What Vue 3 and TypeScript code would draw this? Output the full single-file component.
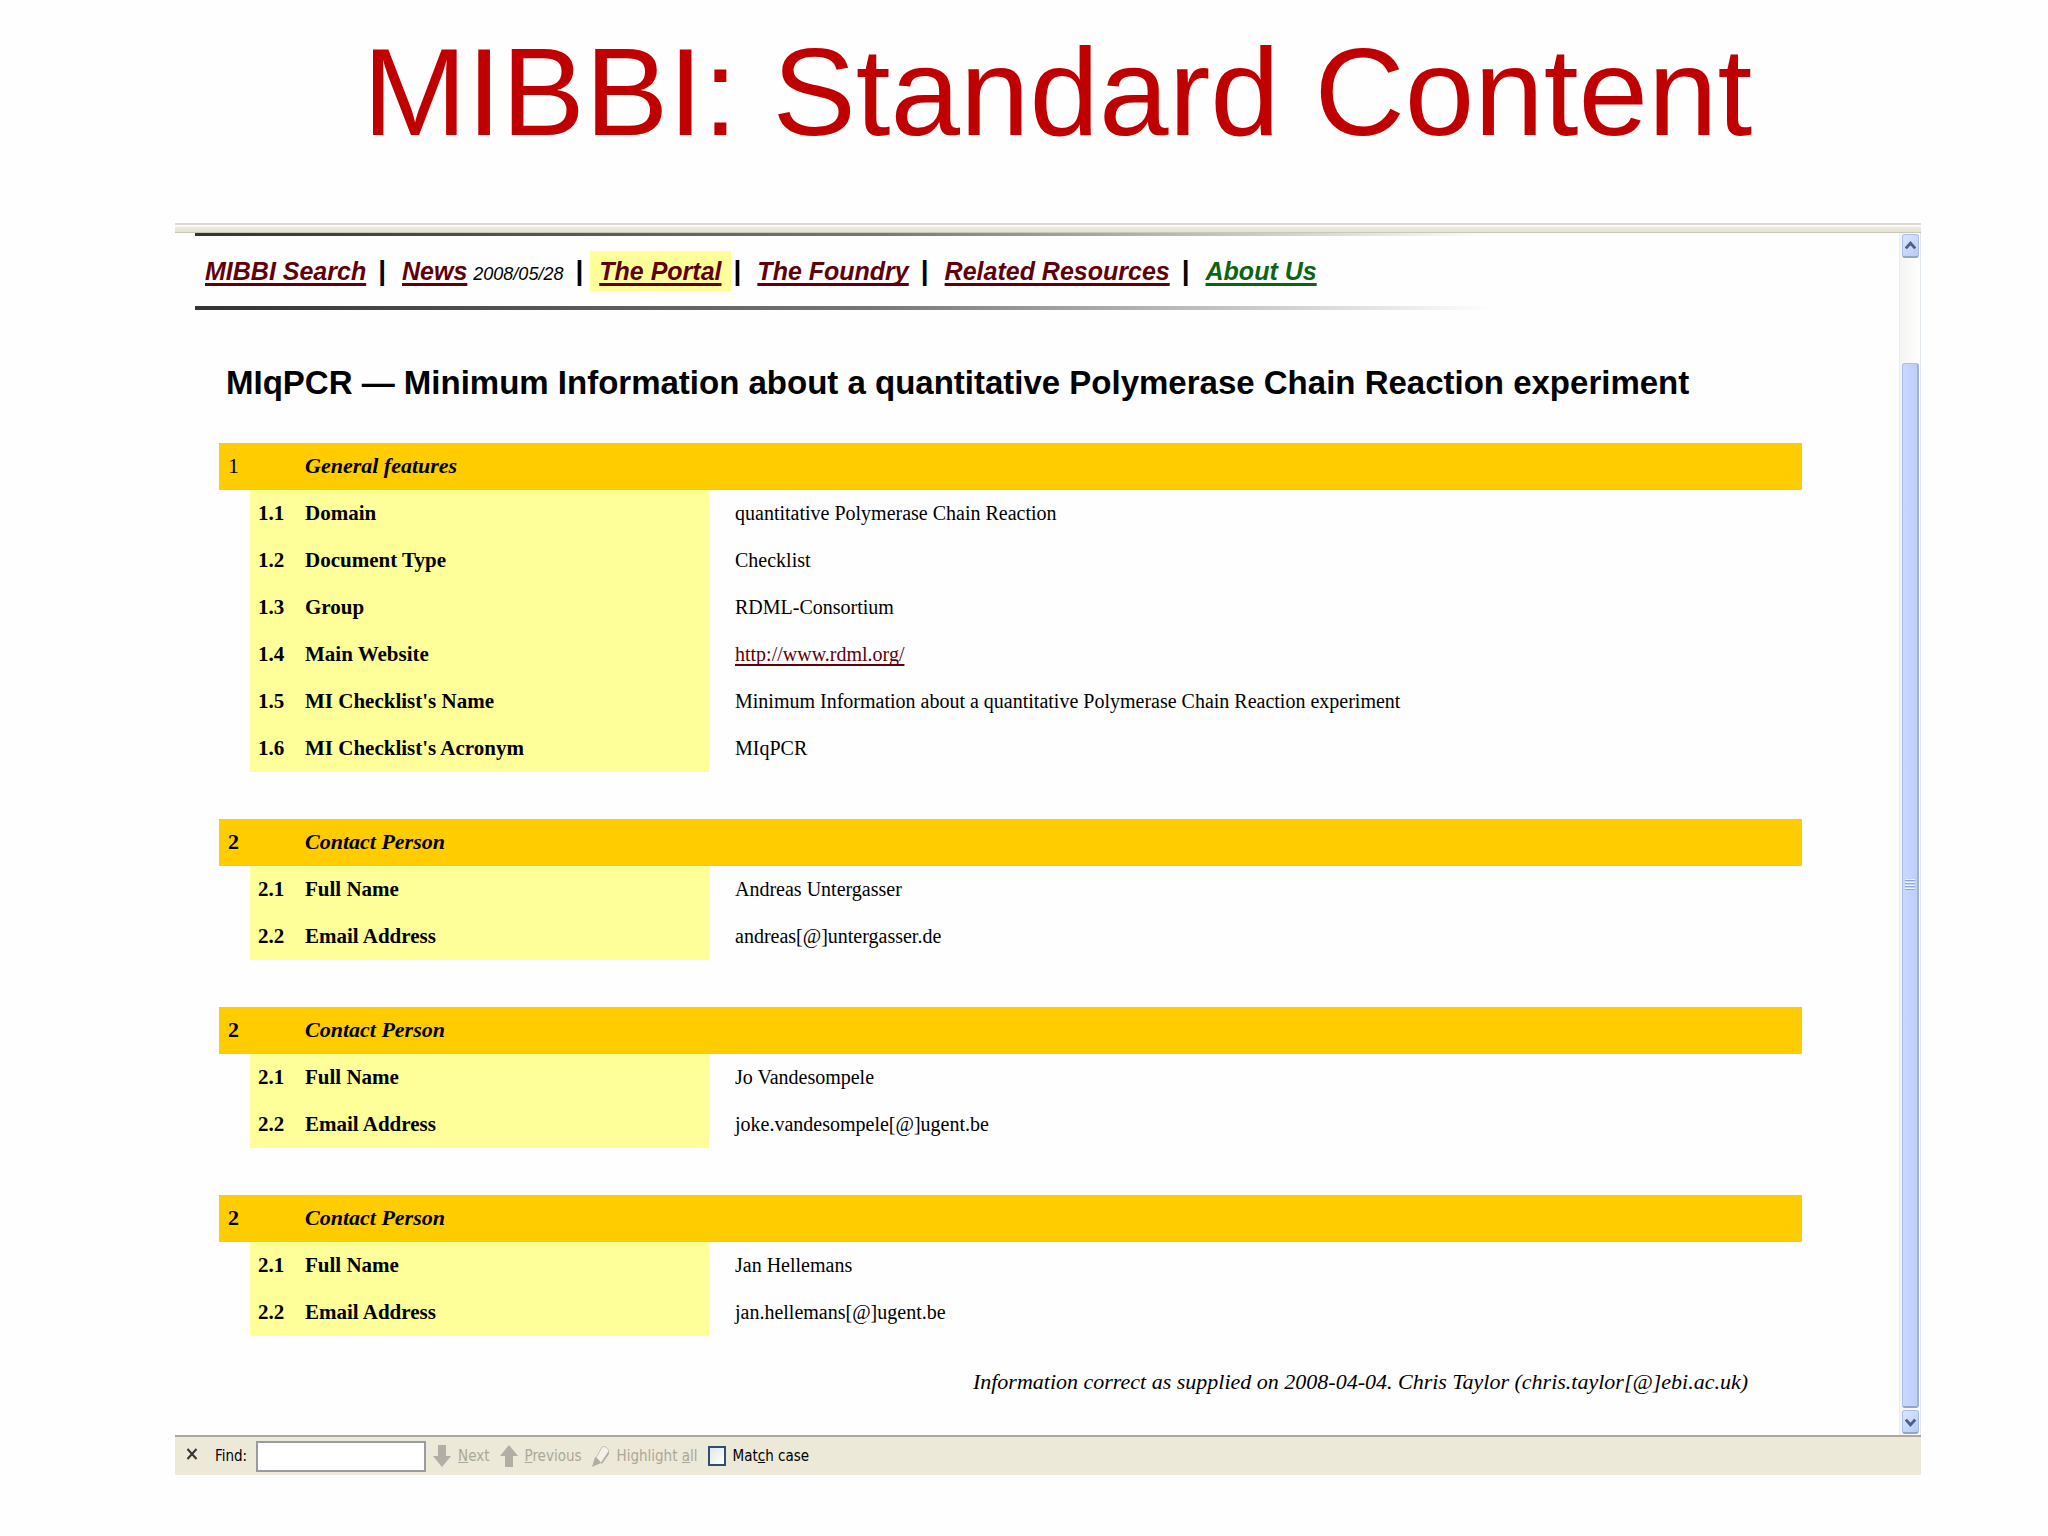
<script setup lang="ts">
interface Row {
  no: string
  label: string
  value: string
  href?: string
}
interface Section {
  no: string
  title: string
  plain?: boolean
  rows: Row[]
}

const contact = (name: string, email: string): Section => ({
  no: '2',
  title: 'Contact Person',
  rows: [
    { no: '2.1', label: 'Full Name', value: name },
    { no: '2.2', label: 'Email Address', value: email },
  ],
})

const sections: Section[] = [
  {
    no: '1',
    title: 'General features',
    plain: true,
    rows: [
      { no: '1.1', label: 'Domain', value: 'quantitative Polymerase Chain Reaction' },
      { no: '1.2', label: 'Document Type', value: 'Checklist' },
      { no: '1.3', label: 'Group', value: 'RDML-Consortium' },
      { no: '1.4', label: 'Main Website', value: 'http://www.rdml.org/', href: 'http://www.rdml.org/' },
      {
        no: '1.5',
        label: "MI Checklist's Name",
        value: 'Minimum Information about a quantitative Polymerase Chain Reaction experiment',
      },
      { no: '1.6', label: "MI Checklist's Acronym", value: 'MIqPCR' },
    ],
  },
  contact('Andreas Untergasser', 'andreas[@]untergasser.de'),
  contact('Jo Vandesompele', 'joke.vandesompele[@]ugent.be'),
  contact('Jan Hellemans', 'jan.hellemans[@]ugent.be'),
]

const links = [
  { text: 'MIBBI Search' },
  { text: 'News', date: '2008/05/28' },
  { text: 'The Portal', kind: 'current' },
  { text: 'The Foundry' },
  { text: 'Related Resources' },
  { text: 'About Us', kind: 'about' },
]
</script>

<template>
  <div class="slide">
    <h1 class="slide-title">MIBBI: Standard Content</h1>

    <div class="browser">
      <div class="chrome-edge"></div>

      <div class="viewport">
        <main class="page">
          <nav class="nav">
            <template v-for="(link, i) in links" :key="link.text">
              <span v-if="i > 0" class="bar">|</span>
              <span class="item" :class="link.kind">
                <a href="#">{{ link.text }}</a>
                <span v-if="link.date" class="date">{{ link.date }}</span>
              </span>
            </template>
          </nav>

          <h2 class="heading">MIqPCR — Minimum Information about a quantitative Polymerase Chain Reaction experiment</h2>

          <table class="checklist">
            <colgroup>
              <col class="c-indent" />
              <col class="c-no" />
              <col class="c-label" />
              <col />
            </colgroup>
            <tbody v-for="(s, i) in sections" :key="i">
              <tr v-if="i > 0" class="gap"><td colspan="4"></td></tr>
              <tr class="section">
                <th colspan="2" scope="rowgroup" class="s-no" :class="{ plain: s.plain }">{{ s.no }}</th>
                <th colspan="2" scope="rowgroup" class="s-title">{{ s.title }}</th>
              </tr>
              <tr v-for="r in s.rows" :key="r.no">
                <td></td>
                <th class="no">{{ r.no }}</th>
                <th scope="row" class="label">{{ r.label }}</th>
                <td class="value">
                  <a v-if="r.href" :href="r.href">{{ r.value }}</a>
                  <template v-else>{{ r.value }}</template>
                </td>
              </tr>
            </tbody>
          </table>

          <p class="note">Information correct as supplied on 2008-04-04. Chris Taylor (chris.taylor[@]ebi.ac.uk)</p>
        </main>

        <div class="scrollbar">
          <button type="button" class="step" aria-label="Scroll up">
            <svg viewBox="0 0 16 20" width="16" height="20"><path d="M3 12.500 8 7l5 5.500" /></svg>
          </button>
          <div class="thumb"><i></i><i></i><i></i><i></i></div>
          <button type="button" class="step" aria-label="Scroll down">
            <svg viewBox="0 0 16 20" width="16" height="20"><path d="M3 7.500 8 13l5-5.500" /></svg>
          </button>
        </div>
      </div>

      <form class="findbar" @submit.prevent>
        <button type="button" class="close" aria-label="Close">
          <svg viewBox="0 0 12 12" width="12" height="12"><path d="M1.500 1 10.500 11M10.500 1 1.500 11" /></svg>
        </button>
        <label for="find">Find:</label>
        <input id="find" type="text" class="query" />
        <button type="button" class="tool">
          <svg viewBox="0 0 18 24" width="18" height="24">
            <path class="arrow" d="M5 1h8v11h5L9 23 0 12h5z" />
          </svg>
          <span><u>N</u>ext</span>
        </button>
        <button type="button" class="tool">
          <svg viewBox="0 0 18 24" width="18" height="24">
            <path class="arrow" d="M5 23h8V12h5L9 1 0 12h5z" />
          </svg>
          <span><u>P</u>revious</span>
        </button>
        <button type="button" class="tool">
          <svg viewBox="0 0 18 24" width="18" height="24">
            <path class="pen" d="M4 14 10 3q4-2 7 4L9 19z" />
            <path class="nib" d="M0 23 3 13q3 1 6 6zM9 19l8-12v3l-7 10z" />
          </svg>
          <span>Highlight <u>a</u>ll</span>
        </button>
        <input id="case" type="checkbox" class="box" />
        <label for="case">Mat<u>c</u>h case</label>
      </form>
    </div>
  </div>
</template>

<style>
body {
  margin: 0;
  background: #fefefe;
}
</style>

<style scoped>
.slide {
  font-family: "Liberation Sans", Arial, sans-serif;
  color: #000;
  padding-bottom: 60px;
}
.slide-title {
  margin: 0;
  padding: 20px 0 59px 67px;
  font-size: 125px;
  line-height: 144px;
  font-weight: 400;
  text-align: center;
  color: #c00000;
}
.browser {
  margin: 0 127px 0 175px;
}
.chrome-edge {
  height: 7px;
  border-top: 2px solid #dcdad0;
  border-bottom: 1px solid #c9c7b8;
  background: linear-gradient(#fff 0 1px, #eeece0 2px, #e4e2d2);
}
.viewport {
  display: flex;
  border-bottom: 2px solid #aaa89e;
}
.page {
  flex: 1;
  min-width: 0;
}

/* Navigation between two fading rules */
.nav {
  display: flex;
  align-items: center;
  height: 70px;
  margin-left: 20px;
  padding: 3px 0 4px 10px;
  background:
    linear-gradient(90deg, #333, #777 40%, transparent 76%) top / 100% 3px no-repeat,
    linear-gradient(90deg, #333, #777 40%, transparent 76%) bottom / 100% 4px no-repeat;
}
.item {
  font-size: 25px;
  line-height: 28px;
  font-weight: 700;
  font-style: italic;
  white-space: nowrap;
}
.item a {
  color: #600008;
  text-decoration-thickness: 3px;
  text-underline-offset: 3px;
  text-decoration-skip-ink: none;
}
.item.current {
  margin: 0 -9px;
  padding: 6px 9px;
  background: #ffff99;
}
.item.about a {
  color: #0a6410;
}
.date {
  margin-left: 6px;
  font-size: 18px;
  line-height: 18px;
  font-weight: 400;
}
.bar {
  margin: 0 16px 0 12px;
  font-size: 28px;
  line-height: 28px;
  font-weight: 700;
}

.heading {
  margin: 53px 0 40px 51px;
  font-size: 33px;
  line-height: 40px;
  font-weight: 700;
}

.checklist {
  width: calc(100% - 141px);
  margin-left: 44px;
  border-collapse: collapse;
  table-layout: fixed;
  font-family: "Liberation Serif", "Times New Roman", serif;
}
.c-indent {
  width: 31px;
}
.c-no {
  width: 47px;
}
.c-label {
  width: 412px;
}
.checklist th,
.checklist td {
  box-sizing: border-box;
  height: 47px;
  padding: 0 0 2px;
  line-height: 24px;
  text-align: left;
}
.section {
  background: #ffcc00;
}
.checklist .s-no {
  padding-left: 9px;
  font-size: 22px;
}
.checklist .s-no.plain {
  font-weight: 400;
}
.checklist .s-title {
  padding-left: 8px;
  font-size: 22px;
  font-style: italic;
}
.checklist .no,
.checklist .label {
  padding-left: 8px;
  font-size: 21px;
  background: #ffff99;
}
.checklist .value {
  padding-left: 26px;
  font-size: 20px;
}
.value a {
  color: #600008;
  text-decoration-thickness: 2px;
  text-underline-offset: 3px;
  text-decoration-skip-ink: none;
}
.note {
  margin: 32px 151px 39px 0;
  font-family: "Liberation Serif", "Times New Roman", serif;
  font-size: 22px;
  line-height: 28px;
  font-style: italic;
  text-align: right;
}

.scrollbar {
  display: flex;
  flex-direction: column;
  box-sizing: border-box;
  width: 22px;
  padding: 1px 1px 1px 2px;
  border-left: 1px solid #ededee;
  border-right: 1px solid #dfe6ea;
  background: linear-gradient(90deg, #f4f4f2, #fefefd);
}
.step {
  display: flex;
  align-items: center;
  justify-content: center;
  height: 24px;
  padding: 0;
  border: 1px solid #a9bdea;
  border-bottom: 2px solid #8ea6c8;
  border-radius: 3px;
  background: linear-gradient(135deg, #dbe5ff, #b9cbf6);
}
.step path {
  fill: none;
  stroke: #4d6185;
  stroke-width: 3;
}
.thumb {
  flex: 1;
  display: flex;
  flex-direction: column;
  align-items: center;
  justify-content: center;
  gap: 2px;
  margin: 105px 0 2px;
  border: 1px solid #a9bdea;
  border-right: 2px solid #9db4d2;
  border-bottom: 2px solid #8ea6c8;
  border-radius: 3px;
  background: linear-gradient(90deg, #c9d8fd, #bccffb);
}
.thumb i {
  width: 10px;
  height: 1px;
  background: #8ca7d8;
  box-shadow: 0 -1px #eef4ff;
}

.findbar {
  display: flex;
  align-items: center;
  height: 38px;
  background: #ece9d8;
  font-family: "DejaVu Sans Condensed", "DejaVu Sans", sans-serif;
  font-size: 15px;
}
.findbar button {
  padding: 0;
  border: 0;
  background: none;
  font: inherit;
}
.close {
  display: flex;
  margin: 0 17px 4px 11px;
}
.close path {
  fill: none;
  stroke: #333;
  stroke-width: 2;
}
.query {
  box-sizing: border-box;
  width: 170px;
  height: 31px;
  margin: 0 7px 0 9px;
  border: 2px solid #9a9aa2;
  background: #fff;
}
.findbar .tool {
  display: flex;
  align-items: center;
  gap: 7px;
  margin-right: 10px;
  color: #aaa897;
}
.arrow {
  fill: #b1afa5;
}
.nib {
  fill: #b1afa5;
}
.pen {
  fill: #f3f1e8;
  stroke: #c4c2b6;
  stroke-width: 1;
}
.box {
  appearance: none;
  box-sizing: border-box;
  width: 18px;
  height: 20px;
  margin: 0 7px 0 0;
  border: 2px solid #2d5072;
  background: linear-gradient(135deg, #dfe6ec, #fff);
}
</style>
